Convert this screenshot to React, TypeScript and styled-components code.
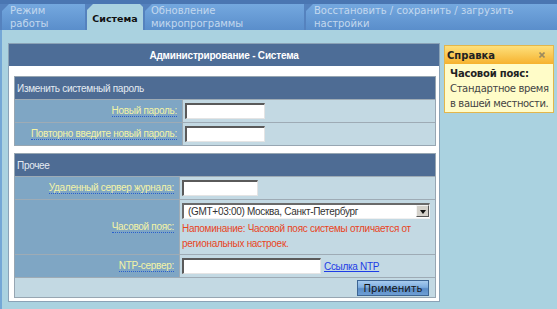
import React from "react";
import styled, { createGlobalStyle, css } from "styled-components";

const GlobalStyle = createGlobalStyle`
  html, body { margin: 0; padding: 0; background: #aad2e0; }
  body { font-family: "Liberation Sans", Arial, sans-serif; }
  #root { width: 557px; height: 309px; overflow: hidden; }
`;

const Page = styled.div`
  display: flex;
  flex-direction: column;
  width: 557px;
  height: 309px;
  background: #aad2e0;
`;

const TabBar = styled.div`
  display: flex;
  align-items: flex-end;
  gap: 2px;
  height: 30px;
  padding-left: 2px;
  box-sizing: border-box;
  background: linear-gradient(#4a76b2 0, #4a76b2 4px, #5582be 4px, #5582be 100%);
`;

const Tab = styled.div<{ $w?: number; $active?: boolean; $fill?: boolean; $pl?: number }>`
  box-sizing: border-box;
  height: 26px;
  ${(p) => (p.$w ? `width: ${p.$w}px;` : "")}
  ${(p) => (p.$fill ? "flex: 1;" : "")}
  padding: 0 4px 0 ${(p) => p.$pl ?? 8}px;
  display: flex;
  align-items: center;
  font-family: "DejaVu Sans", Verdana, sans-serif;
  font-size: 10px;
  line-height: 13px;
  color: #c3d8ee;
  background: linear-gradient(#74a8df, #5a8ecb);
  clip-path: polygon(7px 0, 100% 0, 100% 100%, 0 100%, 0 7px);
  ${(p) =>
    p.$active &&
    css`
      background: #aad2e0;
      color: #111;
      font-weight: bold;
      font-size: 9.5px;
      justify-content: center;
      padding: 2px 0 0 0;
      clip-path: polygon(6px 0, calc(100% - 3px) 0, 100% 3px, 100% 100%, 0 100%, 0 6px);
    `}
`;

const Content = styled.div`
  flex: 1;
  display: flex;
  align-items: flex-start;
  gap: 4px;
  padding: 13px 0 0 6px;
  border-left: 2px solid #74a7d6;
`;

const Panel = styled.div`
  width: 432px;
  box-sizing: border-box;
  border: 1px solid #8aa2b6;
  background: #fff;
`;

const PanelHeader = styled.div`
  height: 22px;
  display: flex;
  align-items: center;
  justify-content: center;
  background: #4d6d97;
  color: #fff;
  font-weight: bold;
  font-size: 10px;
  letter-spacing: -0.2px;
`;

const PanelBody = styled.div`
  display: flex;
  flex-direction: column;
  gap: 7px;
  padding: 10px 3px 3px 5px;
`;

const Section = styled.div`
  border: 1px solid #97a6b2;
  background: #c3d9e3;
  font-size: 10px;
  letter-spacing: -0.3px;
`;

const SectionHeader = styled.div`
  height: 22px;
  display: flex;
  align-items: center;
  padding-left: 2px;
  background: #4e6c94;
  color: #e4ebf2;
`;

const Row = styled.div<{ $label: number; $h?: number }>`
  display: grid;
  grid-template-columns: ${(p) => p.$label}px 1fr;
  min-height: ${(p) => p.$h ?? 22}px;
  border-top: 1px solid #9eabb5;
`;

const LabelCell = styled.div`
  display: flex;
  justify-content: flex-end;
  align-items: center;
  padding-right: 5px;
  background: #7fa6c4;
  border-right: 1px solid #9eabb5;
`;

const Label = styled.span`
  color: #f4f4a6;
  line-height: 11px;
  border-bottom: 1px dotted #2a5fcc;
`;

const FieldCell = styled.div<{ $column?: boolean }>`
  display: flex;
  align-items: center;
  gap: 3px;
  padding-left: 2px;
  ${(p) =>
    p.$column &&
    css`
      flex-direction: column;
      align-items: flex-start;
      justify-content: flex-start;
      gap: 0;
      padding-top: 3px;
      padding-bottom: 3px;
    `}
`;

const TextInput = styled.input<{ $w: number }>`
  box-sizing: border-box;
  width: ${(p) => p.$w}px;
  height: 16px;
  margin: 0;
  padding: 0 3px;
  border-style: solid;
  border-width: 2px 1px 1px 2px;
  border-color: #5a5a5a #e4e4e4 #e4e4e4 #5a5a5a;
  background: #fff;
  font-size: 10px;
  outline: none;
`;

const SelectWrap = styled.div`
  position: relative;
  width: 248px;
  height: 16px;
`;

const Select = styled.select`
  box-sizing: border-box;
  width: 100%;
  height: 16px;
  margin: 0;
  padding: 0 0 0 4px;
  appearance: none;
  border-style: solid;
  border-width: 2px 1px 1px 2px;
  border-color: #6a6a6a #f0f0f0 #f0f0f0 #6a6a6a;
  background: #fff;
  color: #333;
  font-family: "Liberation Sans", Arial, sans-serif;
  font-size: 10px;
  letter-spacing: -0.3px;
  line-height: 12px;
  outline: none;
`;

const SelectArrow = styled.span`
  position: absolute;
  top: 2px;
  right: 1px;
  width: 13px;
  height: 12px;
  box-sizing: border-box;
  background: #d5d2cb;
  border: 1px solid;
  border-color: #f4f4f4 #555 #555 #f4f4f4;
  display: flex;
  align-items: center;
  justify-content: center;
  pointer-events: none;
  &::after {
    content: "";
    border-left: 3px solid transparent;
    border-right: 3px solid transparent;
    border-top: 4px solid #111;
    margin-top: 1px;
  }
`;

const Warning = styled.div`
  margin-top: 2px;
  color: #e8451e;
  line-height: 15px;
`;

const Link = styled.a`
  color: #1d3ce6;
  text-decoration: underline;
  cursor: pointer;
`;

const ButtonRow = styled.div`
  display: flex;
  justify-content: flex-end;
  align-items: flex-start;
  height: 20px;
  padding: 2px 6px 0 0;
  box-sizing: border-box;
  border-top: 1px solid #9eabb5;
`;

const ApplyButton = styled.button`
  box-sizing: border-box;
  width: 72px;
  height: 16px;
  margin: 0;
  padding: 0;
  border: 1px solid #3d6593;
  background: linear-gradient(#a7cbee 0%, #7eaee0 45%, #5a8cc6 55%, #6e9ed4 100%);
  color: #151515;
  font-family: "DejaVu Sans", Verdana, sans-serif;
  font-size: 10px;
  line-height: 13px;
  cursor: pointer;
`;

const HelpBox = styled.div`
  width: 110px;
  box-sizing: border-box;
  margin-top: 2px;
  border: 1px solid #e2b64c;
  background: #fffcc8;
  font-family: "DejaVu Sans", Verdana, sans-serif;
  font-size: 10px;
  overflow: hidden;
`;

const HelpHeader = styled.div`
  height: 18px;
  display: flex;
  align-items: center;
  justify-content: space-between;
  padding: 0 8px 0 2px;
  background: linear-gradient(#fde07c, #f6b22e);
  color: #222;
  font-weight: bold;
`;

const HelpBody = styled.div`
  padding: 2px 0 1px 5px;
  line-height: 15px;
  color: #444;
  white-space: nowrap;
  letter-spacing: -0.35px;
`;

const HelpTitle = styled.div`
  font-weight: bold;
  color: #222;
  letter-spacing: -0.2px;
`;

export default function App() {
  return (
    <>
      <GlobalStyle />
      <Page>
        <TabBar>
          <Tab $w={83}>
            Режим
            <br />
            работы
          </Tab>
          <Tab $w={56} $active>
            Система
          </Tab>
          <Tab $w={159} $pl={6}>
            Обновление
            <br />
            микропрограммы
          </Tab>
          <Tab $fill>
            Восстановить / сохранить / загрузить
            <br />
            настройки
          </Tab>
        </TabBar>
        <Content>
          <Panel>
            <PanelHeader>Администрирование - Система</PanelHeader>
            <PanelBody>
              <Section>
                <SectionHeader>Изменить системный пароль</SectionHeader>
                <Row $label={168}>
                  <LabelCell>
                    <Label>Новый пароль:</Label>
                  </LabelCell>
                  <FieldCell>
                    <TextInput type="password" $w={80} />
                  </FieldCell>
                </Row>
                <Row $label={168}>
                  <LabelCell>
                    <Label>Повторно введите новый пароль:</Label>
                  </LabelCell>
                  <FieldCell>
                    <TextInput type="password" $w={80} />
                  </FieldCell>
                </Row>
              </Section>
              <Section>
                <SectionHeader>Прочее</SectionHeader>
                <Row $label={165}>
                  <LabelCell>
                    <Label>Удаленный сервер журнала:</Label>
                  </LabelCell>
                  <FieldCell>
                    <TextInput type="text" $w={76} />
                  </FieldCell>
                </Row>
                <Row $label={165} $h={54}>
                  <LabelCell>
                    <Label>Часовой пояс:</Label>
                  </LabelCell>
                  <FieldCell $column>
                    <SelectWrap>
                      <Select defaultValue="msk">
                        <option value="msk">(GMT+03:00) Москва, Санкт-Петербург</option>
                      </Select>
                      <SelectArrow />
                    </SelectWrap>
                    <Warning>
                      Напоминание: Часовой пояс системы отличается от
                      <br />
                      региональных настроек.
                    </Warning>
                  </FieldCell>
                </Row>
                <Row $label={165}>
                  <LabelCell>
                    <Label>NTP-сервер:</Label>
                  </LabelCell>
                  <FieldCell>
                    <TextInput type="text" $w={139} />
                    <Link>Ссылка NTP</Link>
                  </FieldCell>
                </Row>
                <ButtonRow>
                  <ApplyButton>Применить</ApplyButton>
                </ButtonRow>
              </Section>
            </PanelBody>
          </Panel>
          <HelpBox>
            <HelpHeader>
              <span>Справка</span>
              <svg width="6" height="6" viewBox="0 0 6 6">
                <path d="M0.5 0.5L5.5 5.5M5.5 0.5L0.5 5.5" stroke="#9c8a5e" strokeWidth="1.6" />
              </svg>
            </HelpHeader>
            <HelpBody>
              <HelpTitle>Часовой пояс:</HelpTitle>
              Стандартное время
              <br />
              в вашей местности.
            </HelpBody>
          </HelpBox>
        </Content>
      </Page>
    </>
  );
}
